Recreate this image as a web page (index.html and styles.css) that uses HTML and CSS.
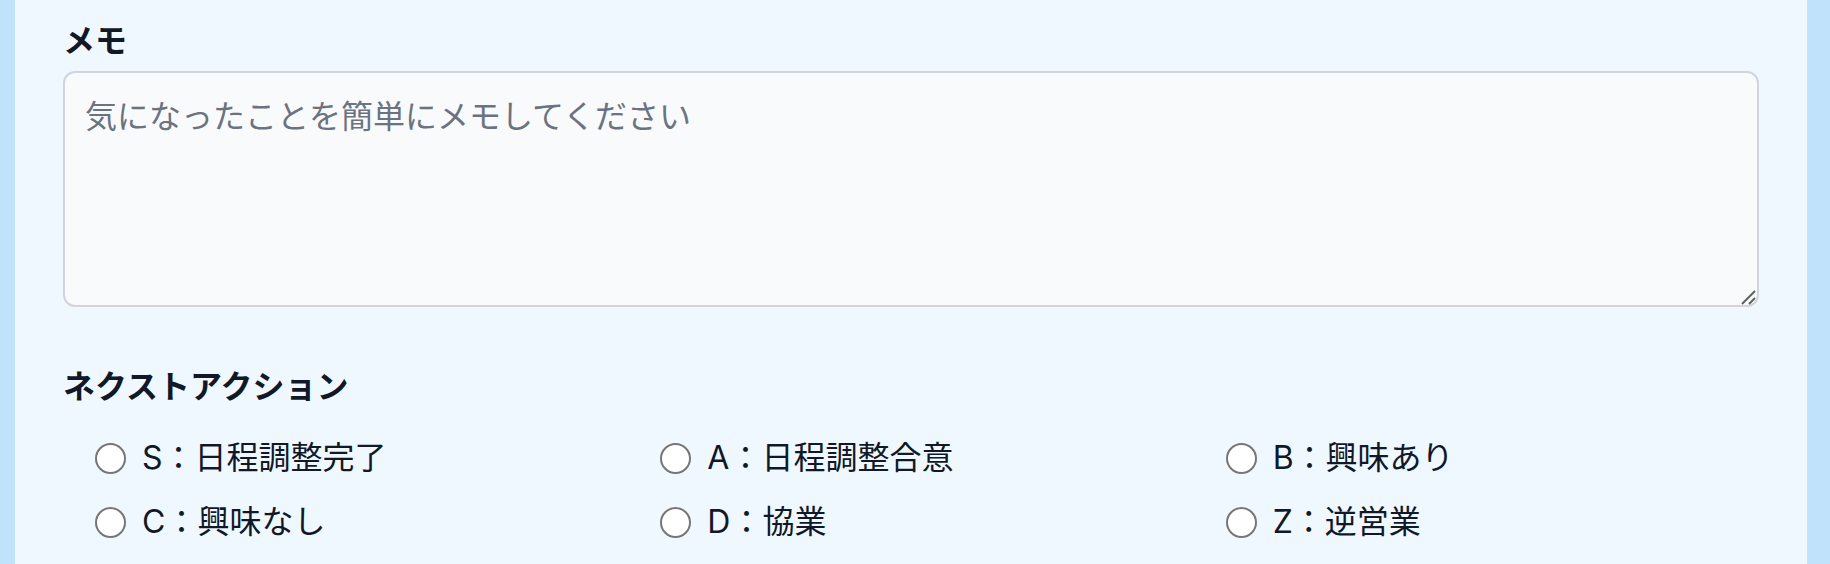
FILE: index.html
```html
<!DOCTYPE html>
<html lang="ja">
<head>
<meta charset="utf-8">
<title>メモ</title>
<link rel="stylesheet" href="styles.css">
</head>
<body>
<main class="panel">
  <section class="field">
    <label class="field-label" for="memo">メモ</label>
    <div class="memo-wrap">
      <textarea id="memo" class="memo" placeholder="気になったことを簡単にメモしてください"></textarea>
      <svg class="grip" width="16" height="16" viewBox="0 0 16 16" aria-hidden="true">
        <line x1="2" y1="15" x2="15" y2="2" stroke="#5f5f5f" stroke-width="2"/>
        <line x1="9" y1="15" x2="15" y2="9" stroke="#5f5f5f" stroke-width="2"/>
      </svg>
    </div>
  </section>
  <section class="field next">
    <div class="field-label">ネクストアクション</div>
    <div class="options">
      <label class="option"><input type="radio" name="next" class="radio"><span>S：日程調整完了</span></label>
      <label class="option"><input type="radio" name="next" class="radio"><span>A：日程調整合意</span></label>
      <label class="option"><input type="radio" name="next" class="radio"><span>B：興味あり</span></label>
      <label class="option"><input type="radio" name="next" class="radio"><span>C：興味なし</span></label>
      <label class="option"><input type="radio" name="next" class="radio"><span>D：協業</span></label>
      <label class="option"><input type="radio" name="next" class="radio"><span>Z：逆営業</span></label>
    </div>
  </section>
</main>
</body>
</html>
```

FILE: styles.css
```css
html, body {
  margin: 0;
  padding: 0;
}
body {
  background: #c0e3fb;
  height: 564px;
  overflow: hidden;
  font-family: "Inter", "Noto Sans CJK JP", sans-serif;
  color: #111827;
}
.panel {
  margin-left: 15px;
  width: 1792px;
  height: 564px;
  box-sizing: border-box;
  background: #f0f8ff;
  padding: 18px 48px 0 48px;
}
.field {
  display: flex;
  flex-direction: column;
}
.field-label {
  display: block;
  font-family: "Noto Sans CJK JP", sans-serif;
  font-weight: 700;
  font-size: 32px;
  line-height: 40px;
  color: #111827;
}
.memo-wrap {
  position: relative;
  margin-top: 13px;
  height: 236px;
}
.memo {
  display: block;
  width: 100%;
  height: 236px;
  box-sizing: border-box;
  border: 2px solid #d1d5db;
  border-radius: 12px;
  background: #f9fafb;
  padding: 20px 20px;
  font-family: "Inter", "Noto Sans CJK JP", sans-serif;
  font-size: 32px;
  line-height: 48px;
  color: #111827;
  resize: none;
  outline: none;
}
.memo::placeholder {
  color: #6b7280;
  opacity: 1;
}
.grip {
  position: absolute;
  right: 3px;
  bottom: 2px;
  pointer-events: none;
}
.next {
  margin-top: 57px;
}
.options {
  margin-top: 30px;
  display: grid;
  grid-template-columns: repeat(3, 1fr);
  row-gap: 16px;
}
.option {
  display: flex;
  align-items: center;
  gap: 16px;
  padding-left: 32px;
  height: 48px;
  font-size: 32px;
  line-height: 48px;
  color: #111827;
}
.radio {
  appearance: none;
  -webkit-appearance: none;
  margin: 0;
  width: 31px;
  height: 31px;
  border: 2px solid #767676;
  border-radius: 50%;
  background: #ffffff;
  box-sizing: border-box;
  flex: none;
}
```
